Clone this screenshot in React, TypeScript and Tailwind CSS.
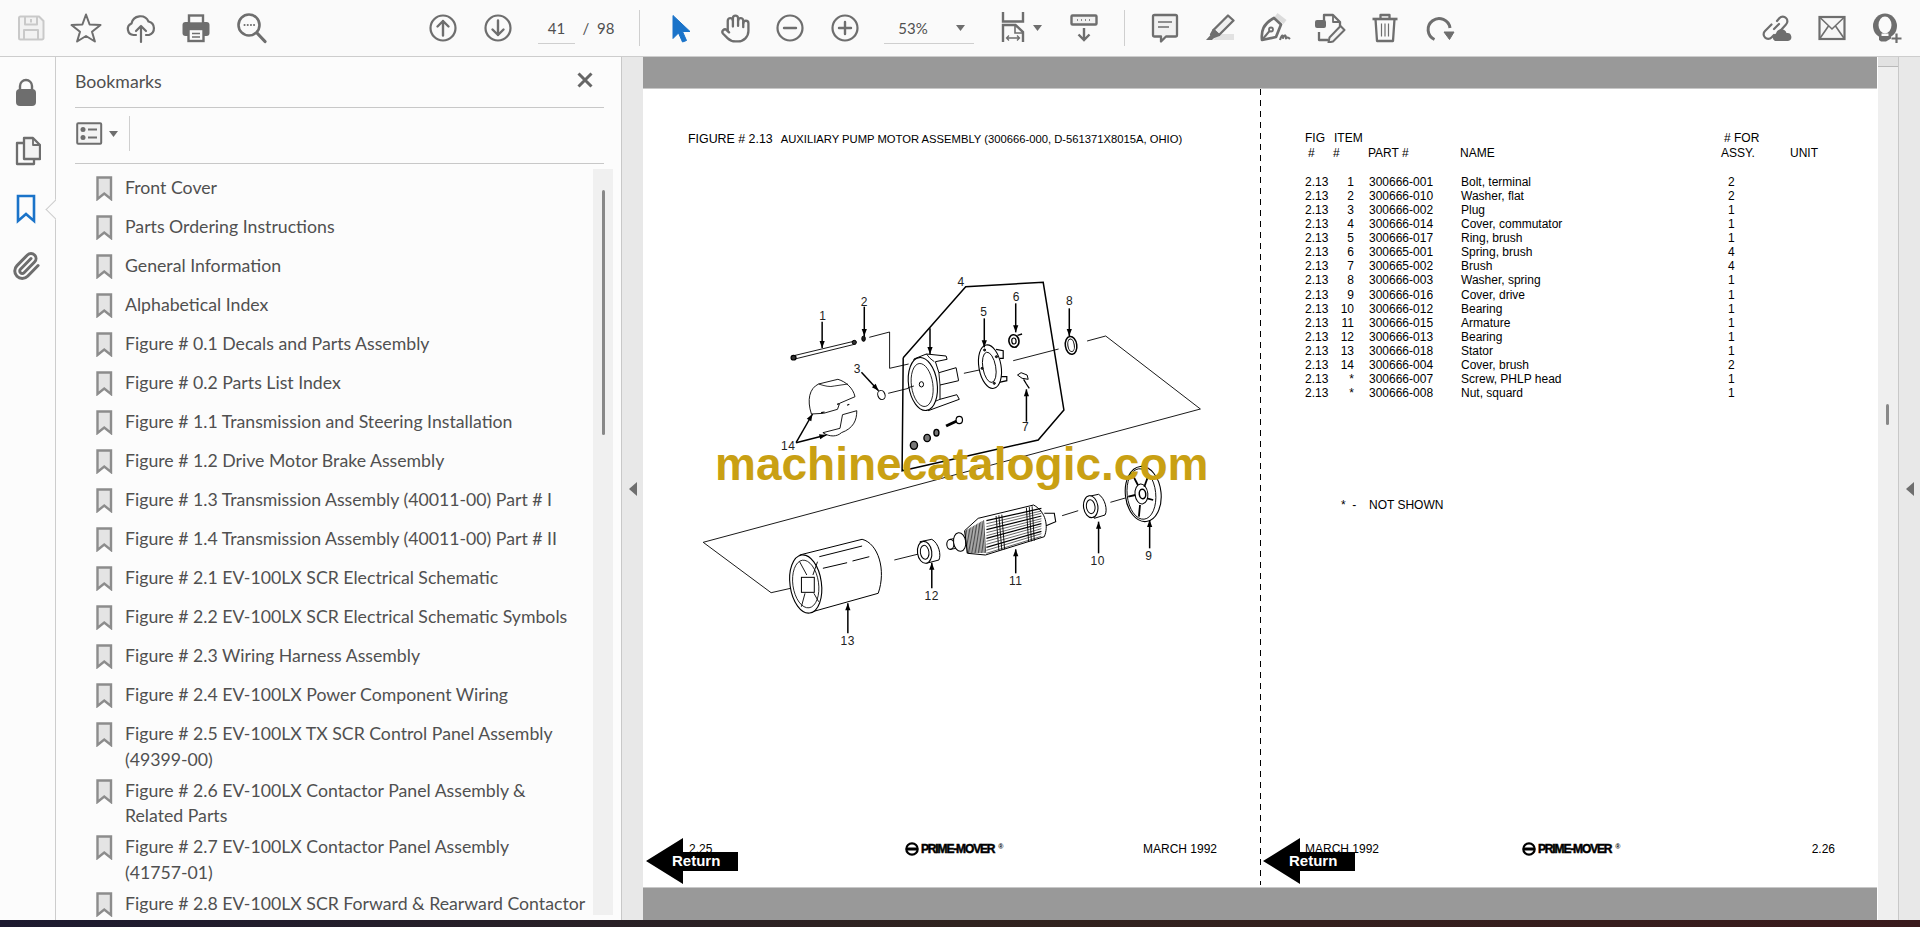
import React from "react";
import { Hand, Paperclip } from "lucide-react";

const G = "#6e6e6e";

function Ic({ children, w = 32, h = 32 }: { children: React.ReactNode; w?: number; h?: number }) {
  return (
    <svg width={w} height={h} viewBox={`0 0 ${w} ${h}`} fill="none" stroke={G} strokeWidth={2} strokeLinejoin="round" strokeLinecap="round">
      {children}
    </svg>
  );
}

function Btn({ children }: { children: React.ReactNode }) {
  return <div className="flex h-[56px] w-[55px] shrink-0 items-center justify-center">{children}</div>;
}

function Caret({ className = "" }: { className?: string }) {
  return (
    <svg width="9" height="6" viewBox="0 0 9 6" className={className}>
      <path d="M0 0H9L4.5 6Z" fill={G} />
    </svg>
  );
}

function BookmarkIcon() {
  return (
    <svg width="17" height="25" viewBox="0 0 17 25" className="mt-px shrink-0">
      <path d="M1.5 1.5H15V23L8.25 17.5L1.5 23Z" fill="#e4e4e4" stroke="#8c8c8c" strokeWidth="2.4" />
    </svg>
  );
}

const bookmarks = [
  "Front Cover",
  "Parts Ordering Instructions",
  "General Information",
  "Alphabetical Index",
  "Figure # 0.1 Decals and Parts Assembly",
  "Figure # 0.2 Parts List Index",
  "Figure # 1.1 Transmission and Steering Installation",
  "Figure # 1.2 Drive Motor Brake Assembly",
  "Figure # 1.3 Transmission Assembly (40011-00) Part # I",
  "Figure # 1.4 Transmission Assembly (40011-00) Part # II",
  "Figure # 2.1 EV-100LX SCR Electrical Schematic",
  "Figure # 2.2 EV-100LX SCR Electrical Schematic Symbols",
  "Figure # 2.3 Wiring Harness Assembly",
  "Figure # 2.4 EV-100LX Power Component Wiring",
  "Figure # 2.5 EV-100LX TX SCR Control Panel Assembly\n(49399-00)",
  "Figure # 2.6 EV-100LX Contactor Panel Assembly &\nRelated Parts",
  "Figure # 2.7 EV-100LX Contactor Panel Assembly\n(41757-01)",
  "Figure # 2.8 EV-100LX SCR Forward & Rearward Contactor",
];

const parts: [string, string, string, string][] = [
  ["1", "300666-001", "Bolt, terminal", "2"],
  ["2", "300666-010", "Washer, flat", "2"],
  ["3", "300666-002", "Plug", "1"],
  ["4", "300666-014", "Cover, commutator", "1"],
  ["5", "300666-017", "Ring, brush", "1"],
  ["6", "300665-001", "Spring, brush", "4"],
  ["7", "300665-002", "Brush", "4"],
  ["8", "300666-003", "Washer, spring", "1"],
  ["9", "300666-016", "Cover, drive", "1"],
  ["10", "300666-012", "Bearing", "1"],
  ["11", "300666-015", "Armature", "1"],
  ["12", "300666-013", "Bearing", "1"],
  ["13", "300666-018", "Stator", "1"],
  ["14", "300666-004", "Cover, brush", "2"],
  ["*", "300666-007", "Screw, PHLP head", "1"],
  ["*", "300666-008", "Nut, squard", "1"],
];

const P = (s: string) =>
  s
    .split(" ")
    .map((p) => {
      const [a, b] = p.split(",").map(Number);
      return `${(a / 2.8).toFixed(1)},${(b / 3).toFixed(1)}`;
    })
    .join(" ");

// path given in zoom coordinates: letters stand alone, numbers come as x,y pairs
const D = (s: string) =>
  s
    .split(" ")
    .map((t) => {
      if (!t.includes(",")) return t;
      const [a, b] = t.split(",").map(Number);
      return `${(a / 2.8).toFixed(1)} ${(b / 3).toFixed(1)}`;
    })
    .join(" ");

function L({ d, w = 0.9 }: { d: string; w?: number }) {
  return <polyline points={P(d)} fill="none" stroke="#000" strokeWidth={w} />;
}

function S({ d, w = 1, f = "#fff" }: { d: string; w?: number; f?: string }) {
  return <path d={D(d)} fill={f} stroke="#000" strokeWidth={w} strokeLinejoin="round" />;
}

function E({ x, y, rx, ry, r = 0, w = 1, f = "#fff" }: { x: number; y: number; rx: number; ry: number; r?: number; w?: number; f?: string }) {
  const cx = x / 2.8;
  const cy = y / 3;
  return <ellipse cx={cx} cy={cy} rx={rx / 2.8} ry={ry / 3} transform={`rotate(${r} ${cx} ${cy})`} fill={f} stroke="#000" strokeWidth={w} />;
}

function Arrow({ x1, y1, x2, y2 }: { x1: number; y1: number; x2: number; y2: number }) {
  const ax = x1 / 2.8, ay = y1 / 3, bx = x2 / 2.8, by = y2 / 3;
  const a = Math.atan2(by - ay, bx - ax);
  const h = 7;
  const s = 2.6;
  const cx = bx - h * Math.cos(a), cy = by - h * Math.sin(a);
  const pts = `${bx},${by} ${cx - s * Math.sin(a)},${cy + s * Math.cos(a)} ${cx + s * Math.sin(a)},${cy - s * Math.cos(a)}`;
  return (
    <g>
      <line x1={ax} y1={ay} x2={bx} y2={by} stroke="#000" strokeWidth="1.5" />
      <polygon points={pts} fill="#000" />
    </g>
  );
}

function Num({ x, y, t }: { x: number; y: number; t: string }) {
  return (
    <text x={x / 2.8} y={y / 3 + 4.5} textAnchor="middle" fontSize="12" fontFamily="'Liberation Sans', sans-serif" letterSpacing="0.6" fill="#222">
      {t}
    </text>
  );
}

function Diagram() {
  const armature: React.ReactNode[] = [];
  for (let i = 0; i < 12; i++) {
    const t = i / 11;
    armature.push(<L key={"a" + i} d={`858,${(782 + t * 98).toFixed(0)} 1012,${(745 + t * 84).toFixed(0)}`} w={i % 3 === 0 ? 1.2 : 0.6} />);
  }
  for (let i = 0; i < 14; i++) {
    const x = 798 + i * 4;
    armature.push(<L key={"b" + i} d={`${x},${812 - i * 2.4} ${x + 6},${880 - i * 0.1}`} w={0.7} />);
  }
  for (let i = 0; i < 3; i++) {
    const x = 885 + i * 8;
    armature.push(<L key={"c" + i} d={`${x},${768 - i * 2} ${x + 8},${872 - i * 2}`} w={0.9} />);
    const x2 = 970 + i * 8;
    armature.push(<L key={"d" + i} d={`${x2},${743 - i * 2} ${x2 + 6},${846 - i * 2}`} w={0.9} />);
  }
  return (
    <svg width="560" height="400" viewBox="0 0 560 400" className="ml-[37px] mt-[114px] block shrink-0">
      {/* plane */}
      <L d="1140,243 1192,228 1457,447 65,847 255,998 310,985" />
      <L d="530,232 587,216 587,325 640,312" />
      <L d="795,340 838,330" />
      <L d="933,302 1060,267" />
      <L d="583,400 640,385" />
      <L d="600,900 668,882" />
      <L d="1070,767 1115,752" />
      <L d="1205,727 1250,713" />
      {/* boundary */}
      <L d="625,293 800,80 1017,67 1075,450 1003,540 622,632 625,293" w={1.5} />

      {/* bolt */}
      <L d="315,288 490,243" />
      <L d="318,298 492,252" />
      <E x={318} y={293} rx={7} ry={7} w={1.2} f="#333" />
      <E x={488} y={247} rx={6} ry={6} w={1} f="#333" />
      <Arrow x1={398} y1={185} x2={398} y2={264} />
      <Num x={400} y={165} t="1" />
      <E x={514} y={236} rx={5} ry={8} w={1} f="#222" />
      <Arrow x1={516} y1={140} x2={516} y2={228} />
      <Num x={516} y={125} t="2" />
      <E x={564} y={405} rx={10} ry={14} r={-20} w={1} />
      <Arrow x1={508} y1={337} x2={556} y2={392} />
      <Num x={497} y={325} t="3" />

      {/* housing 4 */}
      <S d="M 655,297 L 690,282 L 745,288 L 748,298 L 715,305 L 725,338 L 773,323 L 780,362 L 728,375 L 728,418 L 775,404 L 782,418 L 695,452 Z" />
      <L d="690,282 700,295 712,305" />
      <L d="725,338 728,375" />
      <L d="728,418 712,425 700,445" />
      <E x={680} y={372} rx={40} ry={80} r={-8} w={1.1} />
      <E x={678} y={375} rx={30} ry={65} r={-8} w={0.8} />
      <E x={676} y={373} rx={6} ry={8} w={1} />
      <L d="655,378 638,383" />
      <Arrow x1={700} y1={205} x2={700} y2={282} />
      <Num x={787} y={65} t="4" />
      {/* ring 5 */}
      <L d="885,268 905,272 905,295 895,295" w={1.2} />
      <L d="898,350 915,350 915,362 890,368" w={1.2} />
      <E x={868} y={320} rx={31} ry={66} r={-10} w={1.1} />
      <E x={866} y={322} rx={18} ry={46} r={-10} w={0.9} />
      <E x={853} y={270} rx={3} ry={3} f="#333" />
      <E x={846} y={325} rx={3} ry={3} f="#333" />
      <E x={880} y={370} rx={3} ry={3} f="#333" />
      <E x={886} y={290} rx={3} ry={3} f="#333" />
      <Arrow x1={852} y1={175} x2={852} y2={262} />
      <Num x={851} y={155} t="5" />
      <L d="945,226 958,222" w={1.4} />
      <E x={935} y={243} rx={14} ry={19} r={-8} w={1.6} />
      <E x={935} y={243} rx={6} ry={9} r={-8} w={1.2} />
      <Arrow x1={940} y1={130} x2={940} y2={217} />
      <Num x={942} y={110} t="6" />
      <L d="945,345 955,338 972,345 975,358 958,355 945,345" w={1} />
      <L d="962,358 970,372 978,385" w={1.3} />
      <Arrow x1={970} y1={485} x2={970} y2={388} />
      <Num x={968} y={500} t="7" />
      <E x={1095} y={256} rx={16} ry={27} r={-8} w={1.5} />
      <E x={1095} y={256} rx={9} ry={19} r={-8} w={1} />
      <Arrow x1={1090} y1={145} x2={1090} y2={228} />
      <Num x={1091} y={122} t="8" />

      {/* screws */}
      <E x={655} y={556} rx={10} ry={12} w={1.4} f="#777" />
      <E x={692} y={534} rx={9} ry={11} w={1.4} f="#777" />
      <E x={718} y={518} rx={7} ry={10} w={1.4} f="#777" />
      <L d="745,498 775,483" w={3} />
      <E x={782} y={480} rx={9} ry={11} w={1.2} />

      {/* cover 14 */}
      <S d="M 368,462 C 355,420 362,385 388,372 L 442,358 C 465,365 485,385 490,410 L 447,430 L 441,448 L 402,460 Z" w={0.9} />
      <path d={D("M 388,372 C 405,378 420,382 432,378 L 470,372")} fill="none" stroke="#000" strokeWidth="0.8" />
      <L d="395,458 405,456" w={1.2} />
      <L d="440,433 446,431" w={1.2} />
      <L d="468,436 474,433" w={1.2} />
      <S d="M 400,518 L 448,505 L 455,464 L 495,452 C 495,482 485,505 452,518 C 440,530 420,532 400,518 Z" w={0.9} />
      <Arrow x1={325} y1={548} x2={371} y2={462} />
      <Arrow x1={325} y1={548} x2={410} y2={525} />
      <Num x={303} y={555} t="14" />

      {/* stator 13 */}
      <S d="M 335,885 L 510,838 C 555,850 578,930 555,1000 L 368,1056 Z" />
      <E x={352} y={972} rx={44} ry={88} r={-8} w={1.1} />
      <E x={352} y={972} rx={36} ry={72} r={-8} w={0.8} />
      <rect x={340 / 2.8} y={952 / 3} width={36 / 2.8} height={45 / 3} fill="#fff" stroke="#000" strokeWidth="1" />
      <L d="335,905 355,945" />
      <L d="385,905 372,945" />
      <L d="340,1040 350,1000" />
      <L d="388,1025 375,1000" />
      <L d="390,890 510,858" w={1} />
      <L d="400,925 468,908" w={1} />
      <L d="483,903 530,890" w={1} />
      <Arrow x1={470} y1={1120} x2={470} y2={1030} />
      <Num x={470} y={1140} t="13" />

      {/* bearing 12 */}
      <S d="M 672,845 L 705,838 C 725,850 732,885 725,900 L 690,910 Z" />
      <E x={685} y={877} rx={20} ry={33} r={-8} w={1.1} />
      <E x={685} y={877} rx={12} ry={21} r={-8} w={1} />
      <Arrow x1={705} y1={985} x2={705} y2={908} />
      <Num x={705} y={1005} t="12" />

      {/* armature 11 */}
      <E x={757} y={853} rx={10} ry={15} w={1.1} />
      <L d="757,838 790,830" />
      <L d="757,868 790,862" />
      <E x={783} y={846} rx={17} ry={28} r={-8} w={1} />
      <S d="M 797,812 L 835,775 L 990,735 C 1025,755 1032,800 1020,830 L 855,885 L 805,880 Z" />
      {armature}
      <L d="1020,760 1048,760 1052,785 1025,797" w={1.1} />
      <Arrow x1={940} y1={940} x2={940} y2={868} />
      <Num x={940} y={960} t="11" />

      {/* bearing 10 */}
      <S d="M 1140,710 L 1172,703 C 1190,715 1198,750 1190,765 L 1160,775 Z" />
      <E x={1150} y={740} rx={20} ry={33} r={-8} w={1.1} />
      <E x={1150} y={740} rx={12} ry={21} r={-8} w={1} />
      <Arrow x1={1172} y1={880} x2={1172} y2={785} />
      <Num x={1170} y={900} t="10" />

      {/* cover 9 */}
      <E x={1297} y={702} rx={50} ry={83} r={-6} w={1.1} />
      <E x={1292} y={702} rx={40} ry={76} r={-6} w={0.9} />
      <E x={1292} y={702} rx={18} ry={30} r={-6} w={1} />
      <E x={1295} y={702} rx={9} ry={14} r={-6} w={1.5} />
      <L d="1265,640 1282,675" w={1.8} />
      <L d="1310,650 1300,680" w={1.8} />
      <L d="1255,710 1275,705" w={1.8} />
      <L d="1325,720 1308,715" w={1.8} />
      <L d="1285,770 1288,735" w={1.8} />
      <Arrow x1={1315} y1={865} x2={1315} y2={780} />
      <Num x={1313} y={885} t="9" />
    </svg>
  );
}

function ReturnArrow() {
  return (
    <div className="relative h-[46px] w-[93px]">
      <svg width="93" height="46" viewBox="0 0 93 46" className="block">
        <path d="M0 23L37 0V14H92V33H37V46Z" fill="#000" />
      </svg>
      <span className="absolute left-[26px] top-[14px] text-[15px] font-bold leading-[18px] text-white">Return</span>
    </div>
  );
}

function Logo() {
  return (
    <div className="flex items-center gap-[2px]">
      <svg width="14" height="14" viewBox="0 0 14 14" className="shrink-0">
        <circle cx="7" cy="7" r="5.7" fill="#fff" stroke="#000" strokeWidth="2.2" />
        <rect x="1.5" y="5.5" width="11" height="3" fill="#000" />
      </svg>
      <span className="text-[12px] font-bold leading-none tracking-[-1.15px] text-black [-webkit-text-stroke:0.5px_#000]">PRIME-MOVER</span>
      <span className="-mt-[5px] ml-[2px] text-[7px] font-bold leading-none text-black">®</span>
    </div>
  );
}

export default function App() {
  return (
    <div className="flex h-screen w-full flex-col overflow-hidden font-['Liberation_Sans',sans-serif]">
      {/* toolbar */}
      <div className="flex h-[57px] shrink-0 items-center border-b border-[#cdcdcd] bg-[#fafafa] pl-[3.5px]">
        <Btn>
          <svg width="28" height="26" viewBox="0 0 28 26" fill="none" stroke="#c9c9c9" strokeWidth="2" strokeLinejoin="round">
            <path d="M2 3a1.5 1.5 0 0 1 1.5-1.5H22L26.5 6V23a1.5 1.5 0 0 1-1.5 1.5H3.5A1.5 1.5 0 0 1 2 23Z" fill="#f2f2f2" />
            <path d="M8 1.5V9.5H20V1.5" />
            <path d="M14 4V7.5" />
            <path d="M7 24.5V15H21V24.5" />
          </svg>
        </Btn>
        <Btn>
          <Ic>
            <polygon points="16,2.5 19.6,12.5 30.5,13 22,19.8 24.9,29.5 16,24 7.1,29.5 10,19.8 1.5,13 12.4,12.5" />
          </Ic>
        </Btn>
        <Btn>
          <Ic>
            <g strokeWidth="2.2">
              <path d="M11 23H8.5A6 6 0 0 1 6.5 11.5A9 9 0 0 1 23.5 9.5A7 7 0 0 1 24 23H21" />
              <path d="M16 30V14M11 19L16 14L21 19" />
            </g>
          </Ic>
        </Btn>
        <Btn>
          <svg width="30" height="30" viewBox="0 0 30 30">
            <rect x="1.5" y="9" width="27" height="14" rx="3" fill={G} />
            <rect x="8" y="2.5" width="14" height="8" fill="#fafafa" stroke={G} strokeWidth="2.4" />
            <rect x="7.5" y="16" width="15" height="12" fill="#fafafa" stroke={G} strokeWidth="2.4" />
            <path d="M11 20.5H19M11 24H19" stroke={G} strokeWidth="1.4" />
          </svg>
        </Btn>
        <Btn>
          <Ic>
            <circle cx="14" cy="13" r="10.5" strokeWidth="2.6" />
            <path d="M22 21L30 29.5" strokeWidth="3.2" />
            <path d="M9.5 13H9.6M12.7 13H12.8M15.9 13H16M19 13H19.1" strokeWidth="2" />
          </Ic>
        </Btn>
        <div className="w-[137px] shrink-0" />
        <Btn>
          <Ic>
            <circle cx="16" cy="16" r="12.5" strokeWidth="2.2" />
            <path d="M16 23.5V9M10.5 14.5L16 9L21.5 14.5" strokeWidth="2.4" />
          </Ic>
        </Btn>
        <Btn>
          <Ic>
            <circle cx="16" cy="16" r="12.5" strokeWidth="2.2" />
            <path d="M16 8.5V23M10.5 17.5L16 23L21.5 17.5" strokeWidth="2.4" />
          </Ic>
        </Btn>
        <div className="ml-[12.5px] mt-[13px] flex h-[31px] w-[37px] shrink-0 items-center justify-center self-start border-b border-[#cfcfcf] font-['Lato',sans-serif] text-[15px] text-[#505050]">41</div>
        <span className="w-[22px] shrink-0 text-center font-['Lato',sans-serif] text-[15px] text-[#505050]">/</span>
        <span className="w-[16px] shrink-0 text-center font-['Lato',sans-serif] text-[15px] text-[#505050]">98</span>
        <div className="ml-[26px] h-[36px] w-px shrink-0 bg-[#cfcfcf]" />
        <div className="ml-[12.5px] flex shrink-0">
          <Btn>
            <svg width="26" height="30" viewBox="0 0 26 30">
              <path d="M6 2.5V25.5L11.5 20L15.5 29L19.5 27.5L15.5 18.5H23Z" fill="#1a73c9" stroke="#1a73c9" strokeWidth="1" strokeLinejoin="round" />
            </svg>
          </Btn>
          <Btn>
            <Hand size={31} color={G} strokeWidth={1.8} />
          </Btn>
          <Btn>
            <Ic>
              <circle cx="16" cy="16" r="12.5" strokeWidth="2.2" />
              <path d="M10 16H22" strokeWidth="2.4" />
            </Ic>
          </Btn>
          <Btn>
            <Ic>
              <circle cx="16" cy="16" r="12.5" strokeWidth="2.2" />
              <path d="M10 16H22M16 10V22" strokeWidth="2.4" />
            </Ic>
          </Btn>
        </div>
        <div className="ml-[11.5px] mt-[13px] flex h-[31px] w-[90px] shrink-0 items-center self-start border-b border-[#cfcfcf] font-['Lato',sans-serif] text-[15px] text-[#505050]">
          <span className="ml-[14px] w-[30px] text-center">53%</span>
          <Caret className="ml-[27.5px]" />
        </div>
        <div className="ml-[27px] h-[56px] w-[24px] shrink-0">
          <svg width="24" height="56" viewBox="0 0 24 56" fill="none" stroke={G} strokeWidth="2.4">
            <path d="M2 12V21.5H22V12" />
            <path d="M2 42V25H14.5L22 32V42" />
            <path d="M14 25V33H22" strokeWidth="1.6" />
            <path d="M5.5 38H18.5M8 35.5L5.5 38L8 40.5M16 35.5L18.5 38L16 40.5" strokeWidth="1.3" />
          </svg>
        </div>
        <Caret className="ml-[7.5px] shrink-0" />
        <div className="ml-[28.5px] shrink-0">
          <svg width="28" height="28" viewBox="0 0 28 28" fill="none" stroke={G}>
            <rect x="1.5" y="1.5" width="25" height="9" rx="1" fill="#f1f1f1" strokeWidth="2.4" />
            <path d="M7 6H7.8M11 6H11.8M15 6H15.8M19 6H19.8" strokeWidth="1.8" />
            <path d="M14 14V26M8.5 20.5L14 26L19.5 20.5" strokeWidth="2.4" />
          </svg>
        </div>
        <div className="ml-[26px] h-[36px] w-px shrink-0 bg-[#cfcfcf]" />
        <div className="ml-[12.5px] flex shrink-0">
          <Btn>
            <svg width="28" height="30" viewBox="0 0 28 30" fill="none" stroke={G} strokeWidth="2.3" strokeLinejoin="round">
              <path d="M3.5 2H24.5A1.5 1.5 0 0 1 26 3.5V22A1.5 1.5 0 0 1 24.5 23.5H15L10 28.5V23.5H3.5A1.5 1.5 0 0 1 2 22V3.5A1.5 1.5 0 0 1 3.5 2Z" fill="#f1f1f1" />
              <path d="M7 9H21M7 14H18" strokeWidth="1.5" />
            </svg>
          </Btn>
          <Btn>
            <svg width="30" height="30" viewBox="0 0 30 30" fill="none" stroke={G} strokeWidth="2.3" strokeLinejoin="round">
              <path d="M8 27H29V21H14Z" fill="#e2e2e2" stroke="none" />
              <path d="M23 2.5L28.5 7.5L14 22L8.5 17Z" fill="#efefef" />
              <path d="M8.5 17L6 21.5L9 24L14 22Z" fill={G} />
              <path d="M5.5 22L1 27H7L9 25Z" fill={G} stroke="none" />
            </svg>
          </Btn>
          <Btn>
            <svg width="32" height="30" viewBox="0 0 32 30" fill="none" stroke={G} strokeWidth="2.7" strokeLinejoin="round">
              <path d="M17 2L26 9" stroke="#dcdcdc" strokeWidth="5" />
              <path d="M15 5L22 11.5L17 24L3 27C2 18 4 11 15 5Z" />
              <path d="M3 27L10.5 18" strokeWidth="2" />
              <circle cx="12" cy="16.5" r="2" fill="#fafafa" strokeWidth="1.8" />
              <path d="M21 27C23 21 24 22 24 25C26 21 27 22 27 25.5C28 24 29 24 31 26" strokeWidth="2.1" />
            </svg>
          </Btn>
          <Btn>
            <svg width="32" height="30" viewBox="0 0 32 30" fill="none" stroke={G} strokeWidth="2.3" strokeLinejoin="round">
              <path d="M10 8V2H19L26 9V13" />
              <path d="M19 2V9H26" strokeWidth="1.8" />
              <rect x="1" y="7" width="11" height="8" rx="2" fill={G} stroke="none" />
              <path d="M5 19V27H14" />
              <path d="M26.5 13L30.5 17L19 28.5L14.5 29.5L15.5 24.5Z" fill="#f3f3f3" strokeWidth="2" />
            </svg>
          </Btn>
          <Btn>
            <svg width="28" height="30" viewBox="0 0 28 30" fill="none" stroke={G} strokeWidth="2.3" strokeLinejoin="round">
              <path d="M1.5 6H26.5" strokeWidth="2.6" />
              <path d="M9.5 6V2H18.5V6" />
              <path d="M4.5 6L6 28H22L23.5 6" />
              <path d="M10.5 10.5V23.5M14 10.5V23.5M17.5 10.5V23.5" strokeWidth="1.2" />
            </svg>
          </Btn>
          <Btn>
            <svg width="30" height="30" viewBox="0 0 30 30" fill="none" stroke={G} strokeWidth="3" strokeLinejoin="round">
              <path d="M9.5 26.5A11 11 0 1 1 25 15" />
              <path d="M19 19H29L24.5 26.5Z" fill={G} strokeWidth="1" />
            </svg>
          </Btn>
        </div>
        <div className="ml-auto flex shrink-0 pr-[5.5px]">
          <Btn>
            <svg width="32" height="30" viewBox="0 0 32 30" fill="none" stroke={G} strokeWidth="2.2" strokeLinecap="round">
              <path d="M13 16L18 11M10.5 11.5L4 18A4.5 4.5 0 0 0 4 24.5V24.5A4.5 4.5 0 0 0 10.5 24.5L13 22" />
              <path d="M16 8L18.5 5A4.5 4.5 0 0 1 25 5V5A4.5 4.5 0 0 1 25 11.5L20 17" />
              <path d="M14 28A4 4 0 0 1 15 20.5A5.5 5.5 0 0 1 25.5 20A4 4 0 0 1 27 28Z" fill={G} stroke="none" />
            </svg>
          </Btn>
          <Btn>
            <svg width="28" height="26" viewBox="0 0 28 26" fill="none" stroke={G} strokeWidth="2.2">
              <rect x="1.5" y="2" width="25" height="22" fill="#f6f6f6" />
              <path d="M1.5 2L14 14L26.5 2M1.5 24L10.5 11M26.5 24L17.5 11" strokeWidth="1.6" />
            </svg>
          </Btn>
          <Btn>
            <svg width="30" height="30" viewBox="0 0 30 30" fill="none">
              <ellipse cx="13" cy="13" rx="12" ry="12.5" fill={G} />
              <ellipse cx="13" cy="12" rx="6.5" ry="8.5" fill="#fafafa" />
              <path d="M7 22H19V25.5L14 28.5H9L7 27Z" fill={G} />
              <path d="M9.5 20.5H16.5V23H9.5Z" fill="#fafafa" />
              <path d="M19.5 25.5H29.5M24.5 20.5V30" stroke={G} strokeWidth="2.2" />
            </svg>
          </Btn>
        </div>
      </div>

      {/* main */}
      <div className="flex min-h-0 flex-1">
        {/* rail */}
        <div className="relative flex w-[56px] shrink-0 flex-col items-center gap-[28px] border-r border-[#cdcdcd] bg-[#fcfcfc] pr-[3px] pt-[21px]">
          <svg width="22" height="30" viewBox="0 0 22 30" className="shrink-0">
            <path d="M5 12V8A6 6 0 0 1 17 8V12" fill="none" stroke={G} strokeWidth="2.4" />
            <rect x="1" y="11" width="20" height="17" rx="4" fill={G} />
          </svg>
          <svg width="26" height="30" viewBox="0 0 26 30" fill="none" stroke={G} strokeWidth="2.3" strokeLinejoin="round" className="ml-[3px] shrink-0">
            <path d="M9 23V2H18L25 9V23Z" fill="#f3f3f3" />
            <path d="M18 2V9H25" strokeWidth="1.8" />
            <path d="M9 7H2V28H19V23" />
          </svg>
          <svg width="20" height="30" viewBox="0 0 20 30" className="shrink-0">
            <path d="M2 2H18V27L10 20L2 27Z" fill="#fcfcfc" stroke="#1a73c9" strokeWidth="2.6" />
          </svg>
          <Paperclip size={30} color={G} strokeWidth={2.4} className="-mt-[1px] shrink-0" />
          {/* pointer notch */}
          <div className="absolute right-[-1px] top-[140px] h-[24px] w-[12px] overflow-hidden">
            <div className="absolute left-[5px] top-[3.5px] h-[17px] w-[17px] rotate-45 border-b border-l border-[#cdcdcd] bg-[#fcfcfc]" />
          </div>
        </div>

        {/* panel */}
        <div className="flex w-[566px] shrink-0 flex-col border-r border-[#c8c8c8] bg-[#fcfcfc] font-['Lato',sans-serif] text-[#505050]">
          <div className="ml-[19px] flex h-[51px] w-[529px] shrink-0 items-center justify-between border-b border-[#c8c8c8] pb-[1px]">
            <span className="text-[17.7px] leading-none">Bookmarks</span>
            <svg width="16" height="16" viewBox="0 0 16 16" className="mr-[11px] -mt-[4px]">
              <path d="M1.5 1.5L14.5 14.5M14.5 1.5L1.5 14.5" stroke="#666" strokeWidth="3" />
            </svg>
          </div>
          <div className="ml-[19px] flex h-[56px] w-[529px] shrink-0 items-center border-b border-[#c8c8c8] pb-[4px]">
            <svg width="27" height="23" viewBox="0 0 27 23" className="ml-[1px] shrink-0">
              <rect x="1.2" y="1.2" width="24" height="20.5" rx="1" fill="#f3f3f3" stroke={G} strokeWidth="2" />
              <circle cx="7" cy="7.5" r="2.5" fill={G} />
              <circle cx="7" cy="15.5" r="2.5" fill={G} />
              <path d="M12 7.5H21M12 15.5H21" stroke={G} strokeWidth="2" />
            </svg>
            <Caret className="ml-[6px] shrink-0" />
            <div className="ml-[11px] h-[35px] w-px bg-[#cfcfcf]" />
          </div>
          <div className="flex min-h-0 flex-1">
            <div className="w-[537px] shrink-0 overflow-hidden pt-[5.5px]">
              {bookmarks.map((b) => (
                <div key={b} className="flex min-h-[39px] gap-[12px] pl-[40px] pt-[5.5px]">
                  <BookmarkIcon />
                  <div className="w-[470px] whitespace-pre-line text-[17.7px] leading-[25.5px]">{b}</div>
                </div>
              ))}
            </div>
            <div className="mb-[5px] mt-[5px] w-[20px] shrink-0 bg-[#f0f0f0] pl-[8.5px] pt-[21px]">
              <div className="h-[245px] w-[3px] rounded-full bg-[#888]" />
            </div>
          </div>
        </div>

        {/* gutter */}
        <div className="flex w-[21px] shrink-0 items-center justify-center bg-[#e8e8e8]">
          <svg width="8" height="14" viewBox="0 0 8 14">
            <path d="M8 0V14L0 7Z" fill={G} />
          </svg>
        </div>

        {/* document */}
        <div className="flex w-[1234px] shrink-0 flex-col bg-[#fff] text-black">
          <div className="h-[32px] shrink-0 border-b border-[#c8c8c8] bg-[#999]" />
          <div className="flex min-h-0 flex-1">
            {/* left page */}
            <div className="relative flex w-[617px] shrink-0 flex-col">
              <div className="ml-[45px] mt-[43px] flex h-[14px] shrink-0 items-center whitespace-nowrap leading-[14px]">
                <span className="text-[12.4px]">FIGURE # 2.13</span>
                <span className="ml-[8px] text-[11.24px]">AUXILIARY PUMP MOTOR ASSEMBLY (300666-000, D-561371X8015A, OHIO)</span>
              </div>
              <Diagram />
              <div className="mb-[31px] mt-auto flex h-[14px] items-center whitespace-nowrap text-[12px] leading-[14px]">
                <span className="ml-[46px] w-[216px]">2.25</span>
                <Logo />
                <span className="ml-auto mr-[43px]">MARCH 1992</span>
              </div>
              <div className="absolute left-[3px] top-[749px]">
                <ReturnArrow />
              </div>
              <div className="absolute left-[72px] top-[345px] whitespace-nowrap text-[46px] font-bold leading-[60px] text-[#c9a013]">machinecatalogic.com</div>
            </div>
            {/* divider */}
            <div className="mb-[2px] w-px shrink-0 bg-[repeating-linear-gradient(to_bottom,#000_0,#000_6px,transparent_6px,transparent_11px)]" />
            {/* right page */}
            <div className="relative flex w-[616px] shrink-0 flex-col text-[12px]">
              <div className="ml-[44px] mt-[42px] shrink-0 leading-[15px]">
                <div className="flex h-[15px]">
                  <span className="w-[29px]">FIG</span>
                  <span className="w-[390px]">ITEM</span>
                  <span># FOR</span>
                </div>
                <div className="flex h-[15px]">
                  <span className="w-[28px] pl-[3px]">#</span>
                  <span className="w-[35px]">#</span>
                  <span className="w-[92px]">PART #</span>
                  <span className="w-[261px]">NAME</span>
                  <span className="w-[69px]">ASSY.</span>
                  <span>UNIT</span>
                </div>
              </div>
              <div className="ml-[44px] mt-[14px] shrink-0">
                {parts.map(([n, p, name, q]) => (
                  <div key={p} className="flex h-[14.07px] leading-[14px]">
                    <span className="w-[35px]">2.13</span>
                    <span className="w-[14px] text-right">{n}</span>
                    <span className="ml-[15px] w-[92px]">{p}</span>
                    <span className="w-[267px]">{name}</span>
                    <span>{q}</span>
                  </div>
                ))}
              </div>
              <div className="ml-[80px] mt-[98px] flex h-[14px] shrink-0 leading-[14px]">
                <span className="w-[28px]">*&nbsp;&nbsp;-</span>
                <span>NOT SHOWN</span>
              </div>
              <div className="mb-[31px] mt-auto flex h-[14px] items-center whitespace-nowrap leading-[14px]">
                <span className="ml-[44px] w-[217px]">MARCH 1992</span>
                <Logo />
                <span className="ml-auto mr-[42px]">2.26</span>
              </div>
              <div className="absolute left-[2px] top-[749px]">
                <ReturnArrow />
              </div>
            </div>
          </div>
          <div className="h-[33px] shrink-0 border-t border-[#c8c8c8] bg-[#999]" />
        </div>

        {/* right scrollbar */}
        <div className="flex w-[21px] shrink-0 flex-col items-center border-l border-[#fff] bg-[#efefef]">
          <div className="h-[10px] w-full shrink-0 border-b border-[#b9b9b9] bg-[#e2e2e2]" />
          <div className="ml-[-1px] mt-[337px] h-[21px] w-[3px] shrink-0 rounded-full bg-[#888]" />
        </div>
        <div className="flex w-[22px] shrink-0 items-center justify-center border-l border-[#c8c8c8] bg-[#e8e8e8]">
          <svg width="8" height="14" viewBox="0 0 8 14">
            <path d="M8 0V14L0 7Z" fill={G} />
          </svg>
        </div>
      </div>
      <div className="h-[7px] shrink-0 bg-linear-to-r from-[#1d1a30] via-[#30231f] to-[#3a1a1c]" />
    </div>
  );
}
